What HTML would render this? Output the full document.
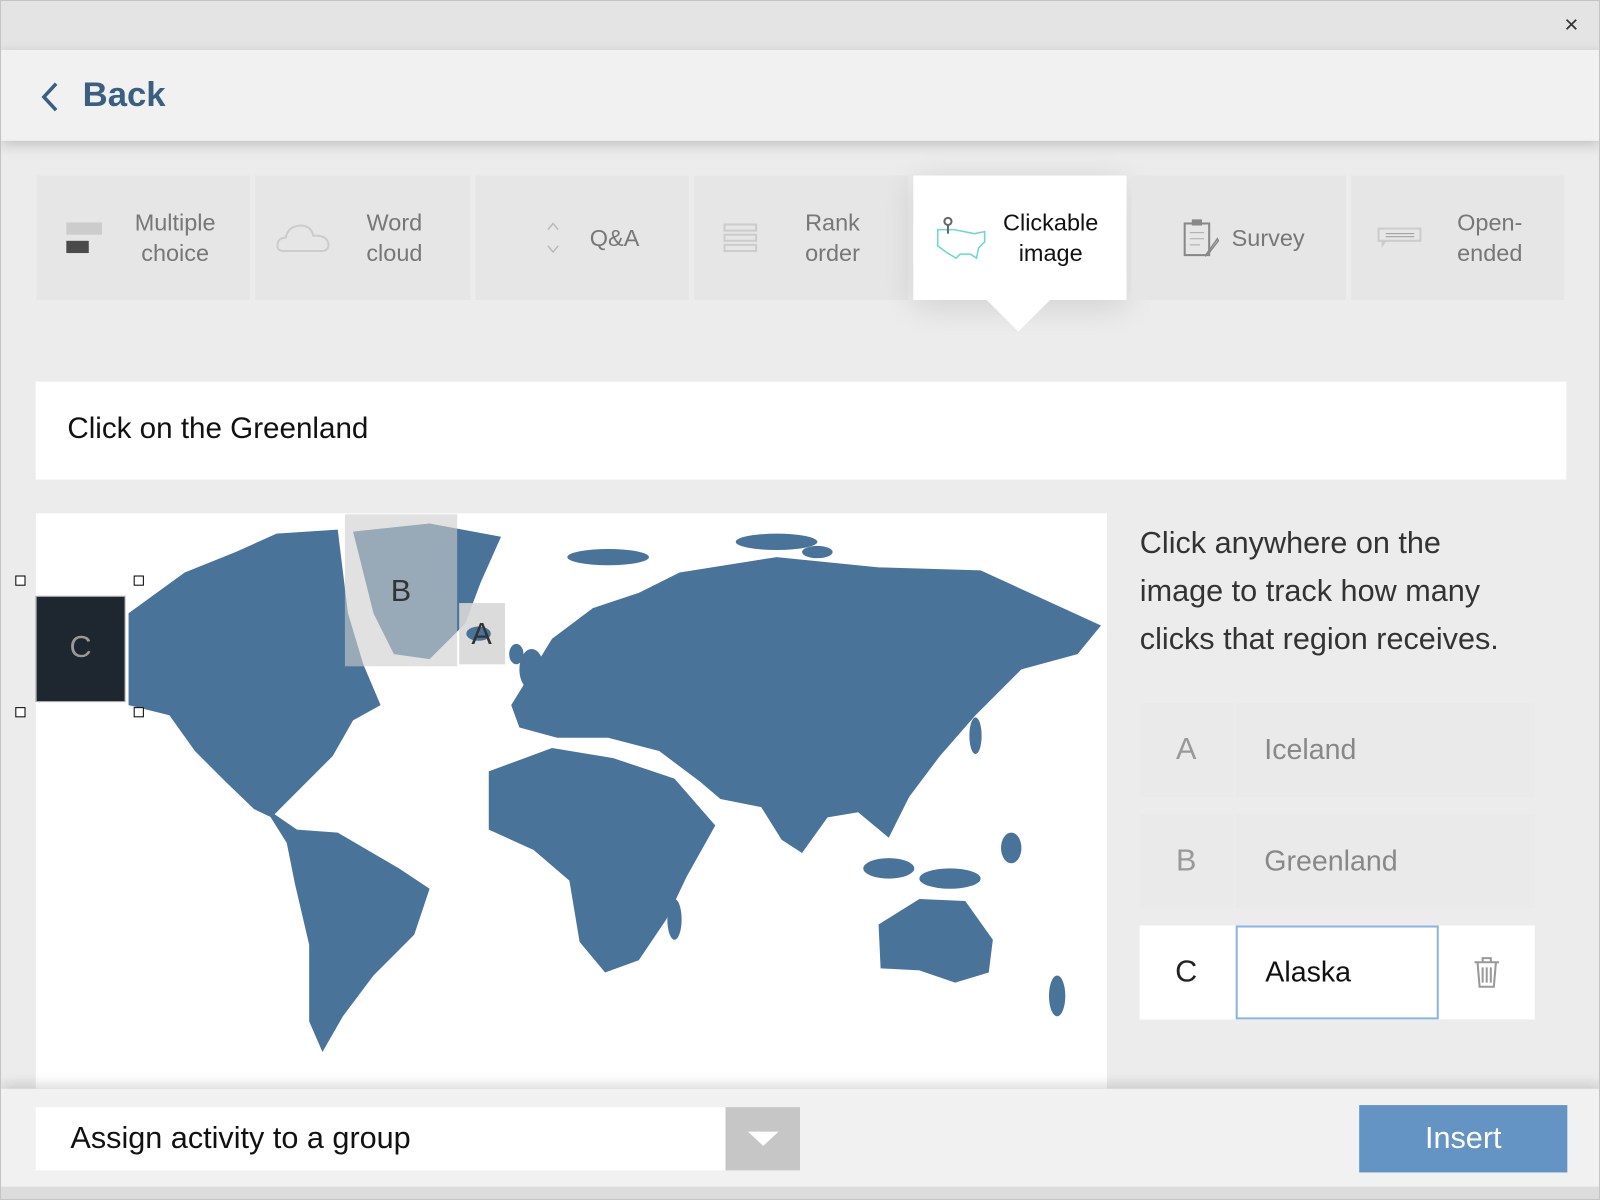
<!DOCTYPE html>
<html><head><meta charset="utf-8"><style>
html,body{margin:0;padding:0;width:1600px;height:1200px;overflow:hidden;background:#ddd;font-family:"Liberation Sans",Arial,sans-serif}
#w{position:absolute;left:0;top:0;width:1568px;height:1176px;transform:scale(1.0204);transform-origin:0 0;background:#ececec;border:1px solid #c4c4c4;box-sizing:border-box;overflow:hidden}
.a{position:absolute}
.tab{position:absolute;top:171px;height:122px;background:#e6e6e6;color:#777;font-size:23px;line-height:30px;text-align:center;display:flex;align-items:center}
.row{position:absolute;left:1116px;width:387px;height:92px}
.lt{position:absolute;left:0;top:0;width:91px;height:92px;background:#eaeaea;color:#999;font-size:30px;line-height:92px;text-align:center}
.inp{position:absolute;left:94px;top:0;width:293px;height:92px;background:#eaeaea;color:#888;font-size:28px;line-height:92px;padding-left:28px;box-sizing:border-box}
</style></head><body><div id="w">
<div class="a" style="left:0;top:0;width:1568px;height:48px;background:#e4e4e4"></div>
<div class="a" style="left:1532px;top:10px;font-size:24px;color:#333">×</div>
<div class="a" style="left:0;top:48px;width:1568px;height:89px;background:#f1f1f1;box-shadow:0 4px 12px rgba(0,0,0,.18)"></div>
<svg class="a" style="left:36px;top:78px" width="24" height="32"><path d="M18 3 L6 16 L18 29" stroke="#3b5f80" stroke-width="3.5" fill="none"/></svg>
<div class="a" style="left:80px;top:73px;font-size:34px;font-weight:bold;color:#3b5f80">Back</div>

<div class="tab" style="left:35px;width:209px"><svg style="margin-left:28px" width="38" height="34"><rect x="1" y="2" width="35" height="12" fill="#ccc"/><rect x="1" y="20" width="22" height="12" fill="#4a4a4a"/></svg><span style="margin-left:30px">Multiple<br>choice</span></div>
<div class="tab" style="left:249px;width:211px"><svg style="margin-left:20px" width="54" height="34"><path d="M8 30 Q1 30 2 23 Q3 17 10 17 Q12 6 24 5 Q35 5 37 15 Q50 14 52 23 Q52 30 45 30 Z" fill="none" stroke="#ccc" stroke-width="2"/></svg><span style="margin-left:35px">Word<br>cloud</span></div>
<div class="tab" style="left:465px;width:209px"><svg style="margin-left:68px" width="16" height="34"><path d="M3 9 L8 3 L13 9 M3 25 L8 31 L13 25" stroke="#bbb" stroke-width="1.5" fill="none"/></svg><span style="margin-left:28px">Q&amp;A</span></div>
<div class="tab" style="left:679px;width:210px"><svg style="margin-left:29px" width="34" height="30"><g fill="none" stroke="#ccc" stroke-width="2"><rect x="1" y="2" width="31" height="6"/><rect x="1" y="12" width="31" height="6"/><rect x="1" y="22" width="31" height="6"/></g></svg><span style="margin-left:46px">Rank<br>order</span></div>
<div class="tab" style="left:894px;width:209px;background:#fff;color:#111;box-shadow:0 6px 30px rgba(0,0,0,.12)"><svg style="margin-left:20px" width="54" height="44"><path d="M4 14 L20 14 L40 18 L50 16 L50 26 L44 32 L42 42 L36 38 L26 38 L22 42 L12 36 L4 30 Z" fill="none" stroke="#69d8d0" stroke-width="1.5"/><circle cx="14" cy="6" r="3.5" fill="none" stroke="#666" stroke-width="2"/><path d="M14 10 L14 18" stroke="#666" stroke-width="2"/></svg><span style="margin-left:14px">Clickable<br>image</span></div>
<div class="a" style="left:966px;top:293px;width:0;height:0;border-left:31px solid transparent;border-right:31px solid transparent;border-top:31px solid #fff"></div>
<div class="tab" style="left:1108px;width:210px"><svg style="margin-left:50px" width="36" height="38"><rect x="2" y="5" width="24" height="31" fill="none" stroke="#888" stroke-width="2"/><rect x="9" y="1" width="10" height="6" fill="#888"/><path d="M7 14h14M7 20h14M7 26h10" stroke="#aaa"/><path d="M34 20 L24 34 L22 37 L25 35 L35 22 Z" fill="none" stroke="#888" stroke-width="1.5"/></svg><span style="margin-left:12px">Survey</span></div>
<div class="tab" style="left:1323px;width:209px"><svg style="margin-left:26px" width="44" height="22"><rect x="1" y="2" width="41" height="12" fill="none" stroke="#ccc" stroke-width="2"/><path d="M8 7h28M8 10h28" stroke="#999"/><path d="M4 14 L4 21 L9 14" fill="#ccc"/></svg><span style="margin-left:34px">Open-<br>ended</span></div>

<div class="a" style="left:34px;top:373px;width:1500px;height:96px;background:#fff"></div>
<div class="a" style="left:65px;top:403px;font-size:29px;color:#111">Click on the Greenland</div>

<svg class="a" style="left:34px;top:502px" width="1050" height="564" viewBox="34 502 1050 564">
<rect x="34" y="502" width="1050" height="564" fill="#fff"/>
<g fill="#4a739a">
<path d="M125 600 L180 560 L230 540 L270 522 L330 518 L340 600 L355 650 L372 690 L345 705 L325 740 L295 770 L265 800 L248 792 L220 765 L190 735 L165 700 L125 690 Z"/>
<path d="M345 520 L420 512 L490 525 L470 570 L455 610 L420 645 L385 640 L365 600 Z"/>
<path d="M258 790 L290 812 L330 815 L390 850 L420 870 L405 915 L365 955 L335 995 L315 1030 L302 1000 L302 925 L288 865 L280 825 Z"/>
<path d="M500 690 L540 625 L580 595 L625 580 L665 560 L760 545 L860 555 L960 558 L1078 612 L1055 640 L1000 655 L955 700 L920 740 L890 780 L870 820 L840 795 L810 800 L785 835 L765 822 L745 790 L705 782 L685 765 L645 735 L595 722 L545 722 L508 712 Z"/>
<path d="M478 755 L540 732 L600 742 L660 762 L700 808 L672 858 L652 900 L625 940 L592 952 L567 922 L557 862 L522 832 L478 812 Z"/>
<path d="M860 905 L900 880 L945 882 L972 920 L968 952 L935 962 L900 950 L862 948 Z"/>
<ellipse cx="660" cy="900" rx="7" ry="20"/>
<ellipse cx="870" cy="850" rx="25" ry="10"/><ellipse cx="930" cy="860" rx="30" ry="10"/><ellipse cx="1035" cy="975" rx="8" ry="20"/>
<ellipse cx="595" cy="545" rx="40" ry="8"/><ellipse cx="760" cy="530" rx="40" ry="8"/>
<ellipse cx="520" cy="655" rx="12" ry="20"/><ellipse cx="505" cy="640" rx="7" ry="10"/>
<ellipse cx="690" cy="575" rx="12" ry="8"/><ellipse cx="800" cy="540" rx="15" ry="6"/>
<path d="M560 620 L600 600 L640 610 L620 650 L590 680 L560 670 Z"/>
<ellipse cx="990" cy="830" rx="10" ry="15"/><ellipse cx="955" cy="720" rx="6" ry="18"/>
</g>
<rect x="337" y="503" width="110" height="149" fill="rgba(205,205,205,.6)"/>
<rect x="449" y="590" width="45" height="60" fill="rgba(215,215,215,.9)"/>
<ellipse cx="468" cy="620" rx="12" ry="7" fill="#4a739a"/>
<text x="392" y="588" font-size="30" text-anchor="middle" fill="#333" font-family="Liberation Sans">B</text>
<text x="471" y="630" font-size="30" text-anchor="middle" fill="#333" font-family="Liberation Sans">A</text>
</svg>
<div class="a" style="left:34px;top:583px;width:88px;height:104px;background:#1e2630;border:1px solid #aaa;box-sizing:border-box;color:#999;font-size:30px;line-height:100px;text-align:center">C</div>
<div class="a" style="left:14px;top:563px;width:8px;height:8px;border:1.5px solid #000;background:#fff"></div>
<div class="a" style="left:130px;top:563px;width:8px;height:8px;border:1.5px solid #000;background:#fff"></div>
<div class="a" style="left:14px;top:692px;width:8px;height:8px;border:1.5px solid #000;background:#fff"></div>
<div class="a" style="left:130px;top:692px;width:8px;height:8px;border:1.5px solid #000;background:#fff"></div>

<div class="a" style="left:1116px;top:508px;font-size:30px;line-height:47px;color:#333">Click anywhere on the<br>image to track how many<br>clicks that region receives.</div>
<div class="row" style="top:688px"><div class="lt">A</div><div class="inp">Iceland</div></div>
<div class="row" style="top:797px"><div class="lt">B</div><div class="inp">Greenland</div></div>
<div class="row" style="top:906px;background:#fff"><div class="lt" style="background:#fff;color:#222">C</div><div class="inp" style="width:199px;background:#fff;border:2px solid #8ab4ea;color:#111;line-height:88px;padding-left:27px">Alaska</div>
<svg class="a" style="left:326px;top:30px" width="28" height="32"><path d="M2 6h24M10 6V2h8v4M5 6l2 24h14l2-24M10 11v15M14 11v15M18 11v15" fill="none" stroke="#999" stroke-width="2"/></svg></div>

<div class="a" style="left:0;top:1066px;width:1568px;height:96px;background:#f1f1f1;box-shadow:0 -4px 12px rgba(0,0,0,.15)"></div>
<div class="a" style="left:0;top:1162px;width:1568px;height:14px;background:#dcdcdc"></div>
<div class="a" style="left:34px;top:1084px;width:676px;height:62px;background:#fff;font-size:30px;line-height:62px;color:#111;padding-left:34px;box-sizing:border-box">Assign activity to a group</div>
<div class="a" style="left:710px;top:1084px;width:73px;height:62px;background:#c6c6c6"></div>
<div class="a" style="left:732px;top:1108px;border-left:15px solid transparent;border-right:15px solid transparent;border-top:14px solid #fff"></div>
<div class="a" style="left:1331px;top:1082px;width:204px;height:66px;background:#6494c4;color:#fff;font-size:30px;line-height:66px;text-align:center">Insert</div>
</div></body></html>
